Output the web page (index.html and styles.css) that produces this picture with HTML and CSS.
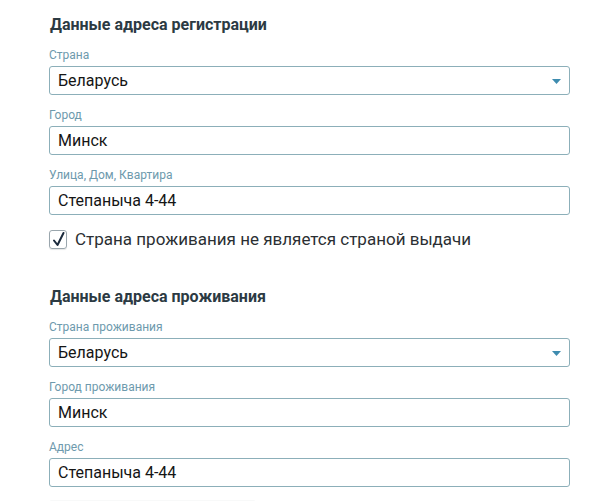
FILE: index.html
```html
<!DOCTYPE html>
<html>
<head>
    <title>Адрес</title>
    <link rel="stylesheet" href="styles.css">
</head>
<body>
    <div class="form">
        <h3 class="section-title">Данные адреса регистрации</h3>

        <div class="field">
            <label class="field-label">Страна</label>
            <div class="input select">
                <span>Беларусь</span>
                <svg class="caret" width="9" height="5" viewBox="0 0 9 5"><path d="M0 0 H9 L4.5 5 Z" fill="#3e8caf"/></svg>
            </div>
        </div>

        <div class="field">
            <label class="field-label">Город</label>
            <div class="input">Минск</div>
        </div>

        <div class="field">
            <label class="field-label">Улица, Дом, Квартира</label>
            <div class="input">Степаныча 4-44</div>
        </div>

        <div class="check-row">
            <span class="checkbox">
                <svg width="15" height="16" viewBox="0 0 15 16"><path d="M3 9.5 L6.5 14 L12.5 2" fill="none" stroke="#1b2a3c" stroke-width="2" stroke-linecap="round" stroke-linejoin="round"/></svg>
            </span>
            <span class="check-text">Страна проживания не является страной выдачи</span>
        </div>

        <h3 class="section-title second">Данные адреса проживания</h3>

        <div class="field">
            <label class="field-label">Страна проживания</label>
            <div class="input select">
                <span>Беларусь</span>
                <svg class="caret" width="9" height="5" viewBox="0 0 9 5"><path d="M0 0 H9 L4.5 5 Z" fill="#3e8caf"/></svg>
            </div>
        </div>

        <div class="field">
            <label class="field-label">Город проживания</label>
            <div class="input">Минск</div>
        </div>

        <div class="field">
            <label class="field-label">Адрес</label>
            <div class="input">Степаныча 4-44</div>
        </div>

        <div class="footer-bar"></div>
    </div>
</body>
</html>
```

FILE: styles.css
```css
body {
    margin: 0;
    background: #fff;
    font-family: Roboto, "Liberation Sans", sans-serif;
}
.form {
    width: 521px;
    padding: 14px 0 0 49px;
}
.section-title {
    margin: 0 0 0 1px;
    font-size: 16px;
    line-height: 21px;
    font-weight: bold;
    color: #2c3a43;
}
.section-title.second { margin-top: 37px; }
.field { margin-top: 13px; }
.field-label {
    display: block;
    font-size: 12px;
    line-height: 15px;
    margin-bottom: 3px;
    color: #6e9aad;
}
.input {
    box-sizing: border-box;
    height: 29px;
    border: 1px solid #8cafb9;
    border-radius: 3px;
    padding: 0 8px;
    font-size: 16px;
    line-height: 27px;
    color: #151515;
}
.select {
    display: flex;
    justify-content: space-between;
    align-items: center;
}
.caret { margin-top: 1px; }
.check-row {
    display: flex;
    align-items: center;
    gap: 8px;
    margin-top: 14px;
    height: 20px;
}
.checkbox {
    box-sizing: border-box;
    width: 18px;
    height: 19px;
    border: 1px solid #9aa6ad;
    border-radius: 3px;
    display: flex;
    align-items: center;
    justify-content: center;
    box-shadow: 0 1px 1px rgba(0,0,0,0.1);
}
.check-text {
    font-size: 17px;
    line-height: 20px;
    color: #2b2f33;
}
.footer-bar {
    margin-top: 13px;
    width: 207px;
    height: 10px;
    background: #f8f9f9;
    border-radius: 3px;
}
```
